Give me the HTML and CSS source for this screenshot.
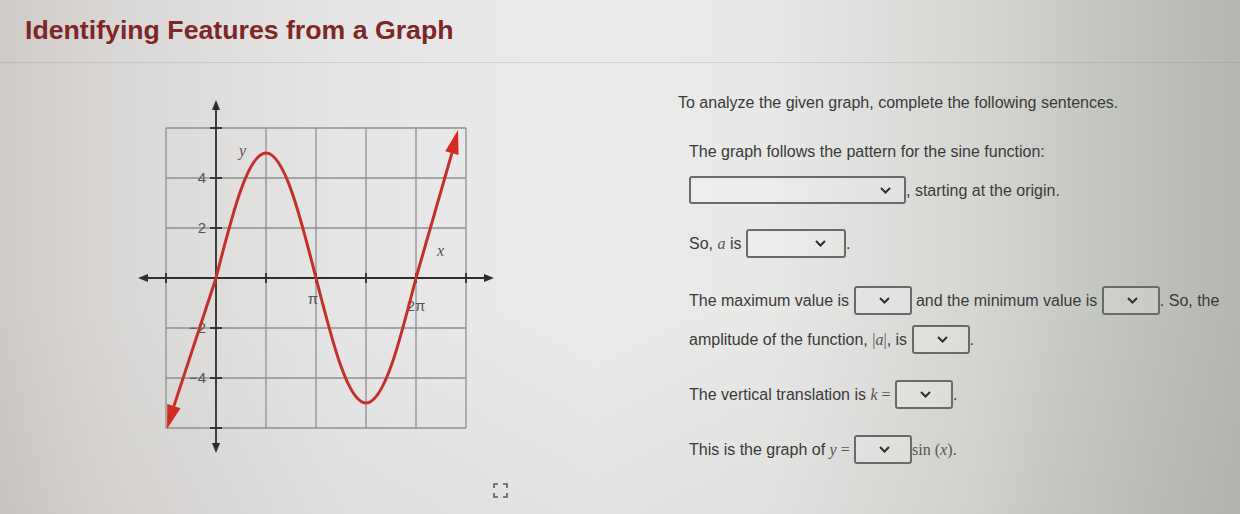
FILE: index.html
```html
<!DOCTYPE html>
<html lang="en">
<head>
<meta charset="utf-8">
<title>Identifying Features from a Graph</title>
<link rel="stylesheet" href="styles.css">
</head>
<body>
<header class="page-head">
  <h1 class="title">Identifying Features from a Graph</h1>
</header>

<main class="lesson">
  <section class="graph-col">
    <svg class="graph" width="380" height="380" viewBox="0 0 380 380" aria-label="Graph of a sine curve">
      <!-- grid: 6 x 6 cells, 50px each -->
      <g class="grid">
        <line x1="36" y1="38" x2="36" y2="338"/>
        <line x1="136" y1="38" x2="136" y2="338"/>
        <line x1="186" y1="38" x2="186" y2="338"/>
        <line x1="236" y1="38" x2="236" y2="338"/>
        <line x1="286" y1="38" x2="286" y2="338"/>
        <line x1="336" y1="38" x2="336" y2="338"/>
        <line x1="36" y1="38" x2="336" y2="38"/>
        <line x1="36" y1="88" x2="336" y2="88"/>
        <line x1="36" y1="138" x2="336" y2="138"/>
        <line x1="36" y1="238" x2="336" y2="238"/>
        <line x1="36" y1="288" x2="336" y2="288"/>
        <line x1="36" y1="338" x2="336" y2="338"/>
      </g>

      <!-- axes -->
      <g class="axis">
        <line x1="14" y1="188" x2="358" y2="188"/>
        <line x1="86" y1="16" x2="86" y2="357"/>
        <line x1="80" y1="38" x2="92" y2="38"/>
        <line x1="80" y1="88" x2="92" y2="88"/>
        <line x1="80" y1="138" x2="92" y2="138"/>
        <line x1="80" y1="238" x2="92" y2="238"/>
        <line x1="80" y1="288" x2="92" y2="288"/>
        <line x1="80" y1="338" x2="92" y2="338"/>
        <line x1="36" y1="183" x2="36" y2="193"/>
        <line x1="136" y1="183" x2="136" y2="193"/>
        <line x1="186" y1="183" x2="186" y2="193"/>
        <line x1="236" y1="183" x2="236" y2="193"/>
        <line x1="286" y1="183" x2="286" y2="193"/>
        <line x1="336" y1="183" x2="336" y2="193"/>
      </g>
      <g class="axis-head">
        <polygon points="8,188 18,184 18,192"/>
        <polygon points="364,188 354,184 354,192"/>
        <polygon points="86,10 82,20 90,20"/>
        <polygon points="86,363 82,353 90,353"/>
      </g>

      <!-- tick labels -->
      <g class="tick-label">
        <text x="76" y="93" text-anchor="end">4</text>
        <text x="76" y="143" text-anchor="end">2</text>
        <text x="76" y="243" text-anchor="end">−2</text>
        <text x="76" y="293" text-anchor="end">−4</text>
        <text x="183" y="214" text-anchor="middle">π</text>
        <text x="286" y="221" text-anchor="middle">2π</text>
      </g>
      <text class="var-label" x="109" y="66">y</text>
      <text class="var-label" x="307" y="166">x</text>

      <!-- y = 5 sin(x), extended past both ends of the period -->
      <path class="curve" d="M43.9,316.1 L86,188
        C102.3,124 117.9,63 136,63
        C154.1,63 169.7,124 186,188
        C202.3,252 217.9,313 236,313
        C254.1,313 269.7,252 286,188
        L321.9,63.1"/>
      <polygon class="curve-head" points="328,40 328.6,65.1 315.2,61.2"/>
      <polygon class="curve-head" points="37,339 50.5,318.3 37.3,313.9"/>
    </svg>

    <div class="graph-tools">
      <svg class="expand" width="15" height="15" viewBox="0 0 15 15" aria-label="Expand graph">
        <path d="M1,5 V1 H5 M10,1 H14 V5 M14,10 V14 H10 M5,14 H1 V10"/>
      </svg>
    </div>
  </section>

  <section class="panel">
    <p class="intro">To analyze the given graph, complete the following sentences.</p>

    <div class="question">
      <div class="line">The graph follows the pattern for the sine function:</div>
      <div class="line line-tight"><span class="select select-wide"><svg class="chev" width="11" height="7" viewBox="0 0 11 7"><polyline points="1,1 5.5,5.5 10,1"/></svg></span>, starting at the origin.</div>
    </div>

    <div class="question">
      <div class="line">So, <span class="m-var">a</span> is <span class="select select-mid"><svg class="chev" width="11" height="7" viewBox="0 0 11 7"><polyline points="1,1 5.5,5.5 10,1"/></svg></span>.</div>
    </div>

    <div class="question">
      <div class="line">The maximum value is <span class="select select-small"><svg class="chev" width="11" height="7" viewBox="0 0 11 7"><polyline points="1,1 5.5,5.5 10,1"/></svg></span> and the minimum value is <span class="select select-small"><svg class="chev" width="11" height="7" viewBox="0 0 11 7"><polyline points="1,1 5.5,5.5 10,1"/></svg></span>. So, the</div>
      <div class="line line-tight">amplitude of the function, <span class="m-op">|</span><span class="m-var">a</span><span class="m-op">|</span>, is <span class="select select-small"><svg class="chev" width="11" height="7" viewBox="0 0 11 7"><polyline points="1,1 5.5,5.5 10,1"/></svg></span>.</div>
    </div>

    <div class="question">
      <div class="line">The vertical translation is <span class="m-var">k</span><span class="m-op"> =</span> <span class="select select-small"><svg class="chev" width="11" height="7" viewBox="0 0 11 7"><polyline points="1,1 5.5,5.5 10,1"/></svg></span>.</div>
    </div>

    <div class="question">
      <div class="line">This is the graph of <span class="m-var">y</span><span class="m-op"> =</span> <span class="select select-small"><svg class="chev" width="11" height="7" viewBox="0 0 11 7"><polyline points="1,1 5.5,5.5 10,1"/></svg></span><span class="m-op">sin</span><span class="m-op"> (</span><span class="m-var">x</span><span class="m-op">)</span>.</div>
    </div>
  </section>
</main>
</body>
</html>
```

FILE: styles.css
```css
* {
  box-sizing: border-box;
}

html,
body {
  margin: 0;
  height: 100%;
}

body {
  width: 1240px;
  height: 514px;
  overflow: hidden;
  font-family: "Liberation Sans", Arial, sans-serif;
  color: #3a3a3a;
  background:
    linear-gradient(180deg, rgba(255, 255, 255, 0) 60%, rgba(120, 110, 105, 0.06) 100%),
    linear-gradient(90deg, #cfcac7 0%, #dad8d6 10%, #e6e6e6 28%, #ebebeb 48%, #e8e8e7 62%, #d6d7d3 78%, #bfc1bb 92%, #b4b6af 100%);
}

/* ---------- header ---------- */

.page-head {
  height: 63px;
  padding: 15px 0 0 25px;
  border-bottom: 1px solid rgba(90, 90, 90, 0.14);
}

.title {
  margin: 0;
  font-size: 26.7px;
  line-height: 30px;
  font-weight: bold;
  color: #7f2627;
}

/* ---------- layout ---------- */

.lesson {
  display: flex;
  align-items: flex-start;
}

.graph-col {
  width: 380px;
  margin: 27px 0 0 130px;
}

.graph {
  display: block;
}

.graph-tools {
  display: flex;
  justify-content: flex-end;
  padding-right: 2px;
  margin-top: 13px;
}

.panel {
  margin-left: 168px;
  padding-top: 25px;
  font-size: 16px;
}

/* ---------- graph ---------- */

.grid line {
  stroke: #8f8f8f;
  stroke-width: 1.3;
}

.axis line {
  stroke: #2e2e2e;
  stroke-width: 1.8;
}

.axis-head polygon {
  fill: #2e2e2e;
}

.tick-label {
  font-family: "Liberation Sans", Arial, sans-serif;
  font-size: 15px;
  fill: #555;
}

.var-label {
  font-family: "Liberation Serif", "Times New Roman", serif;
  font-style: italic;
  font-size: 16px;
  fill: #555;
}

.curve {
  fill: none;
  stroke: #c42f29;
  stroke-width: 3;
  stroke-linejoin: round;
}

.curve-head {
  fill: #d22a22;
}

.expand path {
  fill: none;
  stroke: #5a5a5a;
  stroke-width: 1.6;
}

/* ---------- sentences ---------- */

.intro {
  margin: 0;
  height: 30px;
  line-height: 30px;
}

.question {
  margin-top: 19px;
  padding-left: 11px;
}

.question + .question {
  margin-top: 23px;
}

.question:nth-of-type(3) {
  margin-top: 27px;
}

.question:nth-of-type(4),
.question:nth-of-type(5) {
  margin-top: 25px;
}

.line {
  height: 30px;
  line-height: 30px;
  white-space: nowrap;
}

.line-tight {
  margin-top: 9px;
}

.select {
  display: inline-flex;
  align-items: center;
  justify-content: flex-end;
  height: 29px;
  vertical-align: middle;
  margin-top: -3px;
  border: 2px solid #6a6a6a;
  border-radius: 3px;
  background: rgba(255, 255, 255, 0.18);
}

.select-wide {
  width: 217px;
  height: 28px;
  padding-right: 13px;
}

.select-mid {
  width: 100px;
  padding-right: 18px;
}

.select-small {
  width: 58px;
  padding-right: 20px;
}

.chev polyline {
  fill: none;
  stroke: #2f2f2f;
  stroke-width: 2;
}

.m-var {
  font-family: "Liberation Serif", "Times New Roman", serif;
  font-style: italic;
  color: #555;
}

.m-op {
  font-family: "Liberation Serif", "Times New Roman", serif;
  color: #555;
}
```
